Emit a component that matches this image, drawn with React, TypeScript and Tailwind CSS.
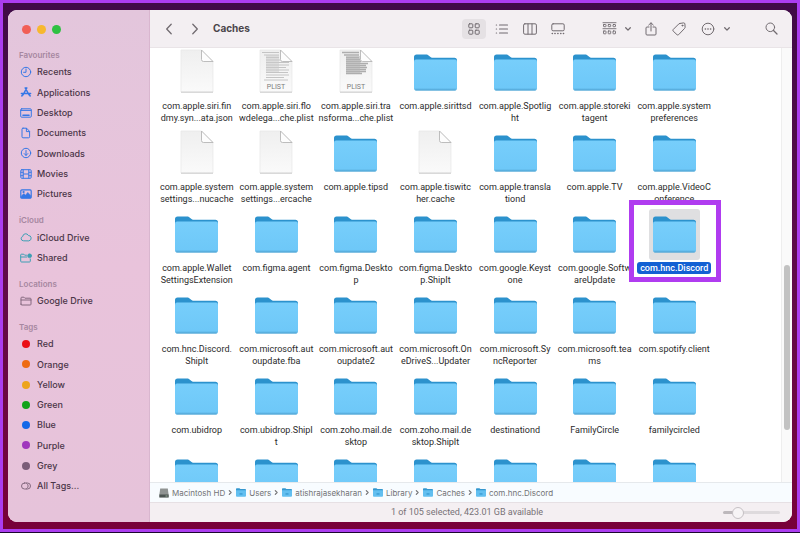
import type { ReactNode } from "react"
import clsx from "clsx"

type Kind = "folder" | "file" | "plist" | "plist-short"

interface Entry {
  lines: string[]
  kind?: Kind
  selected?: boolean
}

const entries: Entry[] = [
  { lines: ["com.apple.siri.fin", "dmy.syn...ata.json"], kind: "file" },
  { lines: ["com.apple.siri.flo", "wdelega...che.plist"], kind: "plist" },
  { lines: ["com.apple.siri.tra", "nsforma...che.plist"], kind: "plist-short" },
  { lines: ["com.apple.sirittsd"] },
  { lines: ["com.apple.Spotlig", "ht"] },
  { lines: ["com.apple.storeki", "tagent"] },
  { lines: ["com.apple.system", "preferences"] },
  { lines: ["com.apple.system", "settings...nucache"], kind: "file" },
  { lines: ["com.apple.system", "settings...ercache"], kind: "file" },
  { lines: ["com.apple.tipsd"] },
  { lines: ["com.apple.tiswitc", "her.cache"], kind: "file" },
  { lines: ["com.apple.transla", "tiond"] },
  { lines: ["com.apple.TV"] },
  { lines: ["com.apple.VideoC", "onference"] },
  { lines: ["com.apple.Wallet", "SettingsExtension"] },
  { lines: ["com.figma.agent"] },
  { lines: ["com.figma.Deskto", "p"] },
  { lines: ["com.figma.Deskto", "p.ShipIt"] },
  { lines: ["com.google.Keyst", "one"] },
  { lines: ["com.google.Softw", "areUpdate"] },
  { lines: ["com.hnc.Discord"], selected: true },
  { lines: ["com.hnc.Discord.", "ShipIt"] },
  { lines: ["com.microsoft.aut", "oupdate.fba"] },
  { lines: ["com.microsoft.aut", "oupdate2"] },
  { lines: ["com.microsoft.On", "eDriveS...Updater"] },
  { lines: ["com.microsoft.Sy", "ncReporter"] },
  { lines: ["com.microsoft.tea", "ms"] },
  { lines: ["com.spotify.client"] },
  { lines: ["com.ubidrop"] },
  { lines: ["com.ubidrop.ShipI", "t"] },
  { lines: ["com.zoho.mail.de", "sktop"] },
  { lines: ["com.zoho.mail.de", "sktop.ShipIt"] },
  { lines: ["destinationd"] },
  { lines: ["FamilyCircle"] },
  { lines: ["familycircled"] },
  { lines: [] },
  { lines: [] },
  { lines: [] },
  { lines: [] },
  { lines: [] },
  { lines: [] },
  { lines: [] },
]

const tags = [
  { name: "Red", color: "bg-[#ea0f16]" },
  { name: "Orange", color: "bg-[#ee6b13]" },
  { name: "Yellow", color: "bg-[#eda41c]" },
  { name: "Green", color: "bg-[#12a31a]" },
  { name: "Blue", color: "bg-[#1568e8]" },
  { name: "Purple", color: "bg-[#a037bd]" },
  { name: "Grey", color: "bg-[#7a5d78]" },
]

function Icon({ w = 14, h = 14, children }: { w?: number; h?: number; children: ReactNode }) {
  return (
    <svg
      width={w}
      height={h}
      viewBox={`0 0 ${w} ${h}`}
      fill="none"
      stroke="currentColor"
      strokeLinecap="round"
      strokeLinejoin="round"
      className="shrink-0"
      aria-hidden="true"
    >
      {children}
    </svg>
  )
}

const favourites = [
  {
    name: "Recents",
    icon: (
      <Icon w={12} h={12}>
        <circle cx="6" cy="6" r="4.7" />
        <path d="M6 3v3.3H3.6" />
      </Icon>
    ),
  },
  {
    name: "Applications",
    icon: (
      <Icon w={12} h={12}>
        <path d="M5.200 1.800l3.900 7.200M6.800 1.800L3 9M1.400 7.400h9.200M1.800 10l.6-.9M10.200 10l-.6-.9" strokeWidth="1.500" />
      </Icon>
    ),
  },
  {
    name: "Desktop",
    icon: (
      <Icon w={12} h={12}>
        <rect x=".7" y="1.800" width="10.600" height="8.400" rx="1" />
        <path d="M1 3.400h10" />
        <path d="M3 8.300h6" strokeWidth="1.600" />
      </Icon>
    ),
  },
  {
    name: "Documents",
    icon: (
      <Icon w={12} h={12}>
        <path d="M3 1.200h3.600l3 3.200v5.400a1 1 0 0 1-1 1H3a1 1 0 0 1-1-1V2.200a1 1 0 0 1 1-1z" />
        <path d="M6.400 1.400v3.200h3" />
      </Icon>
    ),
  },
  {
    name: "Downloads",
    icon: (
      <Icon w={12} h={12}>
        <circle cx="6" cy="6" r="4.700" />
        <path d="M6 3.500v4.800M4.200 6.600L6 8.400l1.800-1.800" />
      </Icon>
    ),
  },
  {
    name: "Movies",
    icon: (
      <Icon w={12} h={12}>
        <rect x=".8" y="1.700" width="10.400" height="8.600" rx="1" />
        <path d="M3.200 2v8M8.800 2v8M3.200 6h5.600M1 4.300h2M1 7.700h2M9 4.300h2M9 7.700h2" />
      </Icon>
    ),
  },
  {
    name: "Pictures",
    icon: (
      <Icon w={12} h={12}>
        <rect x=".8" y="1.900" width="10.400" height="8.200" rx="1" strokeWidth="1.200" />
        <path d="M1.200 8.300l2.600-2.700 1.700 1.600 2.300-2.800 3 3.300v2.300H1.200z" fill="currentColor" strokeWidth=".6" />
        <circle cx="3.400" cy="4" r=".6" fill="currentColor" />
      </Icon>
    ),
  },
]

const cloudItems = [
  {
    name: "iCloud Drive",
    icon: (
      <Icon w={12} h={12}>
        <path d="M3.200 9.800a2.200 2.200 0 0 1-.5-4.300 3 3 0 0 1 5.700-1 2.700 2.700 0 0 1 .8 5.300z" />
      </Icon>
    ),
  },
  {
    name: "Shared",
    icon: (
      <Icon w={12} h={12}>
        <path d="M6.500 3.200H4.700l-.9-1H1.500a.8.8 0 0 0-.8.800v6.200c0 .5.300.8.800.8h8c.5 0 .8-.3.800-.8V7M.8 5h6" />
        <circle cx="9.600" cy="3.800" r="2" fill="currentColor" strokeWidth=".6" />
      </Icon>
    ),
  },
]

function FolderOutline() {
  return (
    <Icon w={12} h={12}>
      <path d="M1 9.200V3c0-.5.300-.8.800-.8h2.100l1 1h5.300c.5 0 .8.300.8.800v5.200c0 .5-.3.800-.8.800H1.800c-.5 0-.8-.3-.8-.8zM1 5h10" />
    </Icon>
  )
}

function SideItem({ icon, tint, children }: { icon: ReactNode; tint: string; children: ReactNode }) {
  return (
    <li>
      <button className="flex h-full w-full items-center gap-[5px] text-left text-[#4b3648]">
        <span className={clsx("flex w-3 justify-center", tint)}>{icon}</span>
        {children}
      </button>
    </li>
  )
}

function SideSection({ title, height, children }: { title: string; height: string; children: ReactNode }) {
  return (
    <section>
      <h2 className="-ml-px h-[14px] text-[8px] leading-[14px] font-semibold text-[#a687a0]">{title}</h2>
      <ul className={clsx("grid auto-rows-fr", height)}>{children}</ul>
    </section>
  )
}

function Folder() {
  return (
    <svg width="43" height="37" viewBox="0 0 43 37" aria-hidden="true">
      <defs>
        <linearGradient id="front" x1="0" y1="0" x2="0" y2="1">
          <stop offset="0" stopColor="#77cefb" />
          <stop offset=".9" stopColor="#6ec8f8" />
          <stop offset="1" stopColor="#58aedd" />
        </linearGradient>
      </defs>
      <path d="M0 3Q0 .4 2.600.4H12c1.600 0 2.300.6 3.300 1.500 1.100 1 2 1.800 3.700 1.800h21.400Q43 3.700 43 6.200V20H0z" fill="#2c92cd" />
      <path d="M0 7.600Q0 5.600 2 5.600H41q2 0 2 2V34q0 2.600-2.600 2.600H2.600Q0 36.600 0 34z" fill="url(#front)" />
      <path d="M1.500 36h40" stroke="#4fa3d3" strokeWidth=".8" />
    </svg>
  )
}

function Doc({ kind }: { kind: Kind }) {
  return (
    <svg width="34" height="44" viewBox="0 0 34 44" className="-mt-1" aria-hidden="true">
      <defs>
        <linearGradient id="paper" x1="0" y1="0" x2="0" y2="1">
          <stop offset="0" stopColor="#efefef" />
          <stop offset="1" stopColor="#fafafa" />
        </linearGradient>
      </defs>
      <path d="M1 1h20.500L33 12.500V43H1z" fill="url(#paper)" stroke="#e6e6e6" strokeWidth=".7" />
      <path d="M1 43.200h32" stroke="#c6c6c6" strokeWidth=".9" />
      {kind === "plist" && (
        <g stroke="#c4c4c4" strokeWidth="1">
          <path d="M3 3.500h17M5 6h15M7 8.500h13M7 11h14M7 13.500h23M7 16h23M7 18.500h20M7 21h23M7 23.500h22M7 26h23M7 28.500h18M5 31h24" />
          <path d="M7 6h13v17H7z" fill="#c9c9c9" fillOpacity=".5" stroke="none" />
        </g>
      )}
      {kind === "plist-short" && (
        <g stroke="#adadad" strokeWidth="1.300">
          <path d="M3 3.500h17M5 6h15M7 8.500h13M7 10.500h14M7 12.500h15M7 14.500h22M7 16.500h20M7 18.500h21M7 20.500h20M7 22.500h20M7 24.500h16" />
          <path d="M7 7h14v17H7z" fill="#b5b5b5" fillOpacity=".5" stroke="none" />
        </g>
      )}
      {kind.startsWith("plist") && (
        <text x="17" y="39.500" textAnchor="middle" fontSize="7" fill="#7b7b7b" fontFamily="Roboto, sans-serif">
          PLIST
        </text>
      )}
      <path d="M21.500 1v9.500q0 2 2 2H33z" fill="#fdfdfd" stroke="#b5b5b5" strokeWidth=".9" />
    </svg>
  )
}

function EntryCell({ lines, kind = "folder", selected }: Entry) {
  return (
    <button className="relative flex flex-col items-center gap-[2px]">
      <span
        className={clsx(
          "flex h-[51px] w-[51px] shrink-0 items-center justify-center rounded-[3px]",
          selected && "bg-[#dfdfe1]"
        )}
      >
        {kind === "folder" ? <Folder /> : <Doc kind={kind} />}
      </span>
      <span
        className={clsx(
          "font-[Roboto,sans-serif] text-[9px] leading-3 whitespace-nowrap",
          selected ? "rounded-[3px] bg-[#1260d3] px-[3px] font-medium text-white" : "text-[#2b2b2b]"
        )}
      >
        {lines.map((line) => (
          <span key={line} className="block">
            {line}
          </span>
        ))}
      </span>
      {selected && (
        <span className="pointer-events-none absolute -top-[9px] -right-[7px] -left-[5px] h-[82px] border-[5px] border-[#b03cf0]" />
      )}
    </button>
  )
}

function SmallFolder() {
  return (
    <svg width="10" height="9" viewBox="0 0 10 9" className="shrink-0" aria-hidden="true">
      <path d="M0 1q0-.8.8-.8h2.600l1 .9h4.800q.8 0 .8.800V5H0z" fill="#3598cf" />
      <path d="M0 2.300h10v5.500q0 .9-.9.900H.9Q0 8.700 0 7.800z" fill="#62bff0" />
      <path d="M3.500 5h3v1.800h-3z" fill="#43a4da" />
    </svg>
  )
}

function Disk() {
  return (
    <svg width="10" height="10" viewBox="0 0 10 10" className="shrink-0" aria-hidden="true">
      <path d="M1.200.6h7.600L9.600 6.500v2.900H.4V6.500z" fill="#8f9392" />
      <path d="M.4 6.500h9.200v2.900H.4z" fill="#4c5452" />
      <path d="M6.500 8h2" stroke="#a9c7ad" strokeWidth=".8" />
    </svg>
  )
}

function ChevronDown() {
  return (
    <Icon w={8} h={6}>
      <path d="M1.700 1.800L4 4.100l2.300-2.300" strokeWidth="1.300" />
    </Icon>
  )
}

const crumbs = ["Macintosh HD", "Users", "atishrajasekharan", "Library", "Caches", "com.hnc.Discord"]

function Toolbar() {
  return (
    <header className="flex h-[38px] shrink-0 items-center border-b border-[#e9e4e7] bg-[#f3eff2] pr-[11px] pl-[9px] text-[#716b70]">
      <button aria-label="Back" className="flex w-5 justify-center">
        <Icon w={8} h={12}>
          <path d="M6.200 1.300L1.700 6l4.500 4.700" strokeWidth="1.300" />
        </Icon>
      </button>
      <button aria-label="Forward" className="ml-[6px] flex w-5 justify-center">
        <Icon w={8} h={12}>
          <path d="M1.800 1.300L6.300 6l-4.500 4.700" strokeWidth="1.300" />
        </Icon>
      </button>
      <h1 className="ml-2 text-[10px] font-bold text-[#4a454a]">Caches</h1>

      <div className="ml-auto flex gap-1">
        <button aria-label="Icon view" className="flex h-5 w-6 items-center justify-center rounded-[4px] bg-[#e5e1e4]">
          <Icon w={12} h={12}>
            <rect x=".8" y=".8" width="4" height="4" rx=".8" />
            <rect x="7.200" y=".8" width="4" height="4" rx=".8" />
            <rect x=".8" y="7.200" width="4" height="4" rx=".8" />
            <rect x="7.200" y="7.200" width="4" height="4" rx=".8" />
          </Icon>
        </button>
        <button aria-label="List view" className="flex h-5 w-6 items-center justify-center">
          <Icon w={14} h={12}>
            <path d="M4.500 2h8M4.500 6h8M4.500 10h8M1.300 2h.3M1.300 6h.3M1.300 10h.3" strokeWidth="1.200" />
          </Icon>
        </button>
        <button aria-label="Column view" className="flex h-5 w-6 items-center justify-center">
          <Icon w={14} h={12}>
            <rect x=".6" y=".8" width="12.800" height="10.400" rx="1.300" />
            <path d="M5 1v10M9 1v10" />
          </Icon>
        </button>
        <button aria-label="Gallery view" className="flex h-5 w-6 items-center justify-center">
          <Icon w={14} h={12}>
            <rect x=".8" y=".8" width="12.400" height="7" rx="1.300" />
            <path d="M1.200 10.500h.2M3.900 10.500h.2M6.800 10.500h.2M9.700 10.500h.2M12.400 10.500h.2" strokeWidth="1.500" />
          </Icon>
        </button>
      </div>

      <button aria-label="Group" className="ml-8 flex w-[30px] items-center justify-between">
        <Icon w={15} h={13}>
          <path d="M1 .7h13M1 6.700h13" strokeWidth=".9" />
          <g strokeWidth=".9">
            <rect x="1.500" y="2.500" width="2.500" height="2.200" rx=".4" />
            <rect x="6.200" y="2.500" width="2.500" height="2.200" rx=".4" />
            <rect x="11" y="2.500" width="2.500" height="2.200" rx=".4" />
            <rect x="1.500" y="9" width="2.500" height="2.800" rx=".4" />
            <rect x="6.200" y="9" width="2.500" height="2.800" rx=".4" />
            <rect x="11" y="9" width="2.500" height="2.800" rx=".4" />
          </g>
        </Icon>
        <ChevronDown />
      </button>
      <button aria-label="Share" className="ml-[9px] flex w-5 justify-center">
        <Icon w={12} h={14}>
          <path d="M4 5H2a1 1 0 0 0-1 1v6a1 1 0 0 0 1 1h8a1 1 0 0 0 1-1V6a1 1 0 0 0-1-1H8M6 9V1M3.700 3L6 .8 8.300 3" />
        </Icon>
      </button>
      <button aria-label="Tags" className="ml-2 flex w-5 justify-center">
        <Icon w={14} h={14}>
          <path d="M7.700 1.500l3.900-.6q1.100-.1 1.300 1l.2 3.300q0 .7-.5 1.200l-6 6.300q-.8.700-1.600 0L1.200 9.100q-.7-.8 0-1.600l5.400-5.400q.5-.5 1.100-.6z" />
          <circle cx="10.400" cy="3.600" r=".5" fill="currentColor" />
        </Icon>
      </button>
      <button aria-label="More" className="ml-3 flex w-[30px] items-center justify-between">
        <Icon w={14} h={14}>
          <circle cx="7" cy="7" r="5.800" />
          <path d="M4.300 7h.2M6.900 7h.2M9.500 7h.2" strokeWidth="1.500" />
        </Icon>
        <ChevronDown />
      </button>
      <button aria-label="Search" className="ml-[30px] flex w-5 justify-center">
        <Icon w={13} h={13}>
          <circle cx="5.300" cy="5.300" r="4.300" />
          <path d="M8.500 8.500l3.500 3.500" strokeWidth="1.300" />
        </Icon>
      </button>
    </header>
  )
}

export default function App() {
  return (
    <div className="h-screen bg-[#1c0530] pb-px font-[Inter,sans-serif] text-[9px]">
      <div className="h-full border-[3px] border-[#ab3df0] bg-linear-to-b from-[#3f0a47] via-[#5f0a4a] to-[#780039] px-[5px] pt-[7px] pb-[7px]">
        <div className="flex h-full overflow-hidden rounded-[9px] bg-white">
          <nav className="flex w-[142px] shrink-0 flex-col border-r border-[#d9b6cf] bg-linear-to-b from-[#e3c6dc] via-[#e9c3db] to-[#e6c3da] pl-3">
            <div className="flex h-[38px] shrink-0 items-center gap-[6px] pl-[2px]">
              <button aria-label="Close" className="h-[9px] w-[9px] rounded-full bg-[#f15f56]" />
              <button aria-label="Minimise" className="h-[9px] w-[9px] rounded-full bg-[#f7b82f]" />
              <button aria-label="Zoom" className="h-[9px] w-[9px] rounded-full bg-[#2fc142]" />
            </div>
            <div className="flex flex-col gap-[9px] font-medium">
              <SideSection title="Favourites" height="h-[142px]">
                {favourites.map((item) => (
                  <SideItem key={item.name} icon={item.icon} tint="text-[#3577e6]">
                    {item.name}
                  </SideItem>
                ))}
              </SideSection>
              <SideSection title="iCloud" height="h-[41px]">
                {cloudItems.map((item) => (
                  <SideItem key={item.name} icon={item.icon} tint="text-[#3d9fb4]">
                    {item.name}
                  </SideItem>
                ))}
              </SideSection>
              <SideSection title="Locations" height="h-5">
                <SideItem icon={<FolderOutline />} tint="text-[#84697f]">
                  Google Drive
                </SideItem>
              </SideSection>
              <SideSection title="Tags" height="h-[162px]">
                {tags.map((tag) => (
                  <SideItem
                    key={tag.name}
                    tint=""
                    icon={<span className={clsx("h-2 w-2 rounded-full", tag.color)} />}
                  >
                    {tag.name}
                  </SideItem>
                ))}
                <SideItem
                  tint="text-[#84697f]"
                  icon={
                    <Icon w={12} h={12}>
                      <rect x="1.500" y="3" width="9" height="6" rx="3" />
                      <path d="M6.500 3.200a3.200 3.200 0 0 1 0 5.600" />
                    </Icon>
                  }
                >
                  All Tags...
                </SideItem>
              </SideSection>
            </div>
          </nav>

          <main className="flex min-w-0 flex-1 flex-col">
            <Toolbar />

            <div className="flex min-h-0 flex-1">
              <div className="-mt-px grid min-w-0 flex-1 auto-rows-[81px] grid-cols-7 overflow-hidden pr-[67px] pl-[7px]">
                {entries.map((entry, i) => (
                  <EntryCell key={i} {...entry} />
                ))}
              </div>
              <div className="flex w-[11px] shrink-0 flex-col items-center border-l border-[#eee] bg-[#fafafa]">
                <div className="basis-1/2" />
                <div className="w-[6px] basis-[38%] rounded-full bg-[#c2c2c2]" />
              </div>
            </div>

            <div className="flex h-5 shrink-0 items-center gap-[3px] border-t border-[#e6e9ec] bg-[#f8fcff] pl-[9px] text-[8px] text-[#737376]">
              {crumbs.map((crumb, i) => (
                <div key={crumb} className="flex items-center gap-[3px]">
                  {i > 0 && (
                    <Icon w={5} h={7}>
                      <path d="M1.300 1.700l1.800 1.800-1.800 1.800" strokeWidth="1.200" />
                    </Icon>
                  )}
                  <button className="flex items-center gap-[3px]">
                    {i === 0 ? <Disk /> : <SmallFolder />}
                    {crumb}
                  </button>
                </div>
              ))}
            </div>

            <footer className="grid h-5 shrink-0 grid-cols-[1fr_auto_1fr] items-center border-t border-[#e6e0e4] bg-[#f4eff2] pr-3 pl-1 text-[#777176]">
              <span />
              <p className="font-[Roboto,sans-serif]">1 of 105 selected, 423.01 GB available</p>
              <input
                type="range"
                aria-label="Icon size"
                defaultValue={20}
                className="h-[3px] w-[57px] appearance-none justify-self-end rounded-full bg-linear-to-r from-[#bdb8bc] from-25% to-[#dedadd] to-25% [&::-webkit-slider-thumb]:h-3 [&::-webkit-slider-thumb]:w-3 [&::-webkit-slider-thumb]:appearance-none [&::-webkit-slider-thumb]:rounded-full [&::-webkit-slider-thumb]:border [&::-webkit-slider-thumb]:border-[#c5c0c4] [&::-webkit-slider-thumb]:bg-[#f7f4f6]"
              />
            </footer>
          </main>
        </div>
      </div>
    </div>
  )
}
